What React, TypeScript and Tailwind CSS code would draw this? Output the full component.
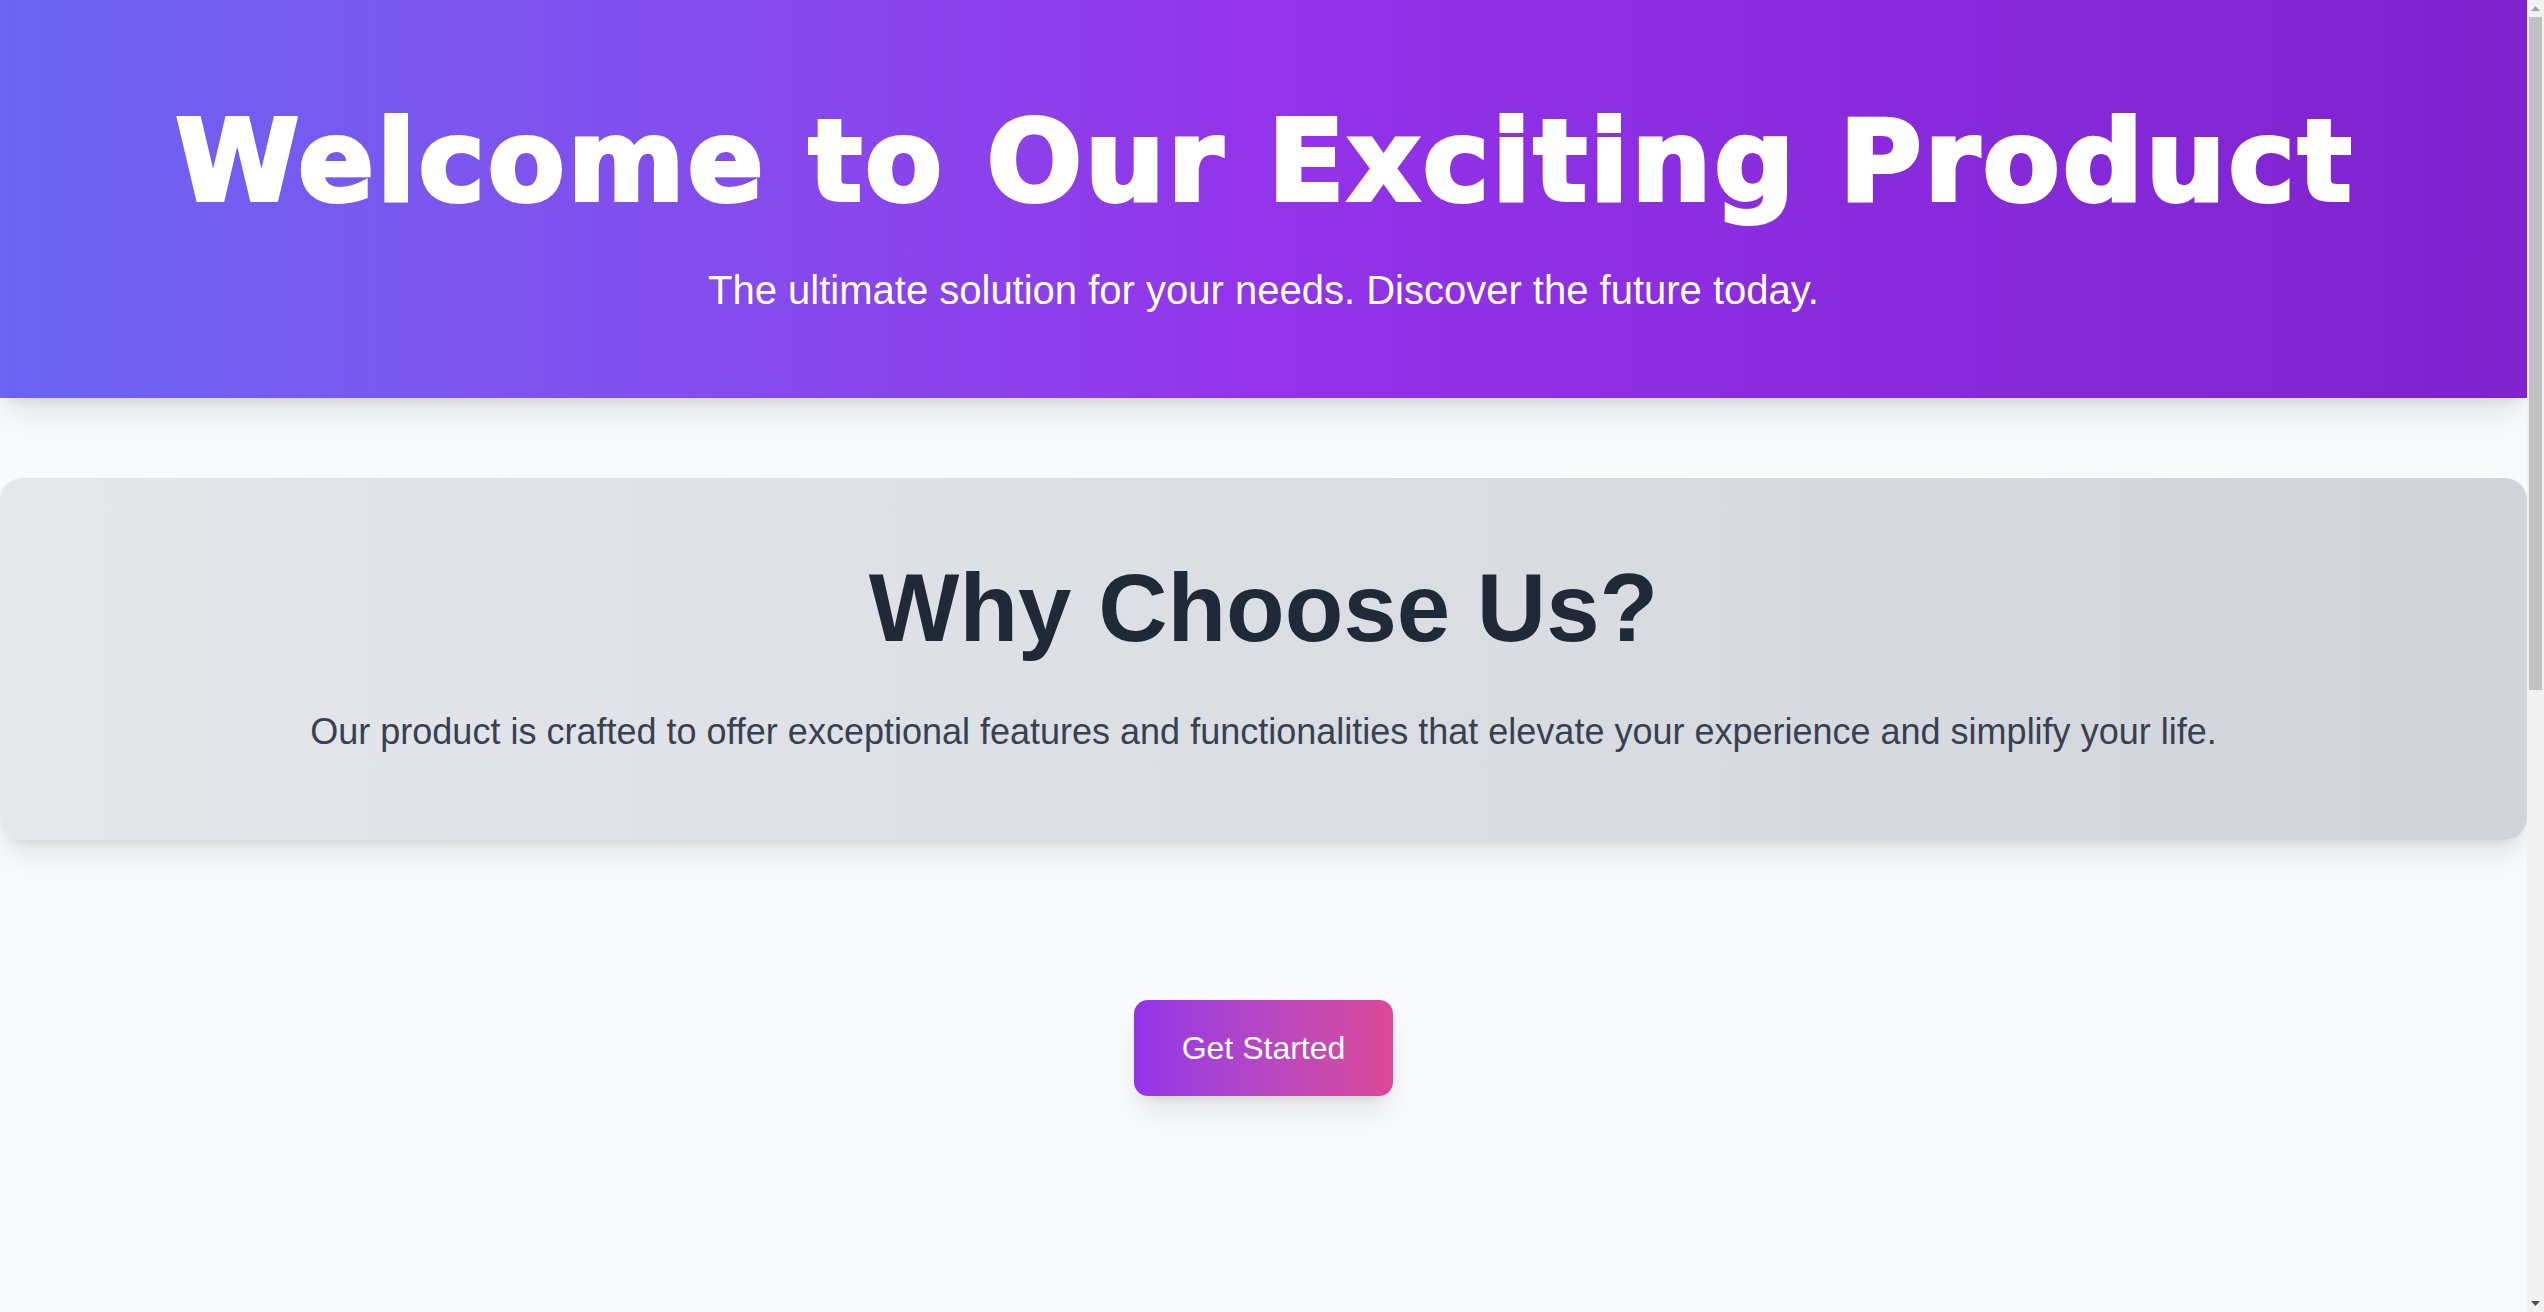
export default function App() {
  return (
    <div className="flex min-h-screen bg-[#f9fafb] font-['Liberation_Sans','Arial',sans-serif]">
      <div className="min-w-0 flex-1 pb-[400px]">
        <header className="bg-linear-to-r from-[#6a64f1] via-[#9333ea] to-[#7e22ce] pt-[101px] pb-[80px] text-center text-white shadow-[0_20px_30px_-6px_rgba(0,0,0,0.1),0_8px_12px_-8px_rgba(0,0,0,0.1)]">
          <h1 className="pl-[3px] font-['DejaVu_Sans',sans-serif] text-[112px] leading-[120px] font-bold tracking-[3px] [-webkit-text-stroke:4px_white]">
            Welcome to Our Exciting Product
          </h1>
          <p className="mt-[41px] text-[40px] leading-[56px]">
            The ultimate solution for your needs. Discover the future today.
          </p>
        </header>

        <main className="mt-[80px] flex flex-col items-center">
          <section className="w-full rounded-[22px] bg-linear-to-r from-[#e5e7eb] to-[#d1d5db] pt-[82px] pb-[80px] text-center shadow-[0_20px_30px_-6px_rgba(0,0,0,0.1),0_8px_12px_-8px_rgba(0,0,0,0.1)]">
            <h2 className="text-[96px] leading-[96px] font-bold text-[#1f2937]">Why Choose Us?</h2>
            <p className="mt-[48px] text-[36px] leading-[56px] text-[#374151]">
              Our product is crafted to offer exceptional features and functionalities that elevate your experience and simplify your life.
            </p>
          </section>

          <button className="mt-[160px] rounded-[14px] bg-linear-to-r from-[#9333ea] to-[#dc4898] px-[48px] py-[24px] text-[32px] leading-[48px] text-white shadow-[0_20px_30px_-6px_rgba(0,0,0,0.1),0_8px_12px_-8px_rgba(0,0,0,0.1)]">
            Get Started
          </button>
        </main>
      </div>

      <aside className="sticky top-0 flex h-screen w-[17px] shrink-0 flex-col bg-[#f1f1f1]">
        <div className="flex h-[17px] items-center justify-center">
          <svg width="9" height="6" viewBox="0 0 9 6"><path d="M4.5 0L9 5H0z" fill="#a3a3a3" /></svg>
        </div>
        <div className="mx-[2px] h-[673px] bg-[#c1c1c1]" />
        <div className="flex-1" />
        <div className="flex h-[17px] items-center justify-center">
          <svg width="9" height="6" viewBox="0 0 9 6"><path d="M0 0h9L4.5 5z" fill="#505050" /></svg>
        </div>
      </aside>
    </div>
  );
}
